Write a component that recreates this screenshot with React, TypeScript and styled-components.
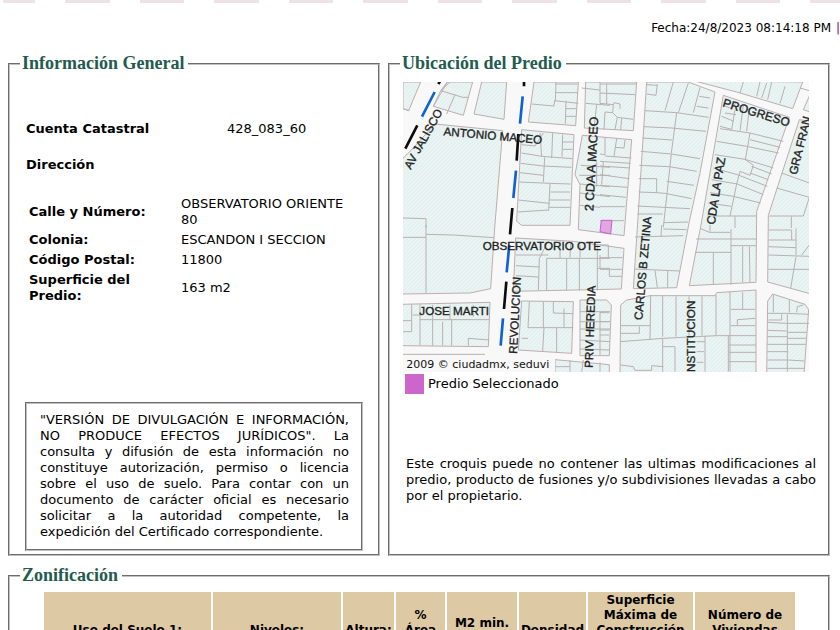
import React from "react";
import styled, { createGlobalStyle } from "styled-components";

const GlobalStyle = createGlobalStyle`
  * { box-sizing: border-box; }
  html { scrollbar-width: none; }
  body {
    margin: 0;
    background: #fff;
    color: #000;
    overflow-x: hidden;
    font-family: Verdana, "DejaVu Sans", sans-serif;
    font-size: 13px;
    line-height: 16px;
  }
`;

const Page = styled.div`
  display: flex;
  flex-direction: column;
`;

const DashStrip = styled.div`
  display: flex;
  gap: 30px;
  height: 3px;
  margin: 0 -15px 0 3px;
`;

const Dash = styled.span<{ $short?: boolean }>`
  flex: ${(p) => (p.$short ? "0 0 32px" : "1")};
  background: #ede3e7;
`;

const DateBar = styled.div`
  display: flex;
  justify-content: flex-end;
  gap: 5px;
  height: 50px;
  padding-top: 17px;
  font-size: 12px;
`;

const Separator = styled.span`
  width: 4px;
  color: #800080;
`;

const Main = styled.main`
  display: flex;
  flex-direction: column;
  gap: 9px;
  padding: 0 10px 20px 8px;
`;

const Columns = styled.div`
  display: grid;
  grid-template-columns: minmax(0, 372fr) minmax(0, 442fr);
  gap: 8px;
`;

const Panel = styled.fieldset<{ $flush?: boolean }>`
  display: flex;
  flex-direction: column;
  min-width: 0;
  margin: 0;
  padding: ${(p) => (p.$flush ? "4px" : "8px")} 12px 3px;
  border: 2px groove #c0c0c0;
`;

const Title = styled.legend`
  margin-left: -2px;
  padding: 0 4px 0 2px;
  color: #235b4e;
  font-family: "Liberation Serif", serif;
  font-size: 18px;
  font-weight: bold;
  line-height: 21px;
`;

const Account = styled.dl`
  display: grid;
  grid-template-columns: 201px 1fr;
  margin: 39px 0 20px;
  padding-left: 4px;
`;

const Term = styled.dt`
  font-weight: bold;
`;

const Value = styled.dd`
  margin: 0;
`;

const Subtitle = styled.h2`
  margin: 0 0 20px;
  padding-left: 4px;
  font-size: 13px;
  line-height: 16px;
`;

const AddressTable = styled.table`
  width: 100%;
  border-spacing: 2px;
  padding-left: 4px;
`;

const AddressLabel = styled.th`
  width: 150px;
  padding: 1px;
  text-align: left;
`;

const AddressValue = styled.td`
  padding: 1px;
  padding-right: 20px;
`;

const Notice = styled.p`
  margin: auto 3px 0;
  padding: 8px 12px 9px 13px;
  border: 2px groove #c0c0c0;
  text-align: justify;
`;

const MapSvg = styled.svg`
  display: block;
  width: 100%;
  height: auto;
  background: #f8f8f8;
`;

const MapArea = styled.div`
  margin: 0 7px 0 1px;
`;

const Key = styled.div`
  display: flex;
  align-items: center;
  gap: 4px;
  height: 20px;
  margin: 2px 0 62px 3px;
`;

const Swatch = styled.span`
  width: 19px;
  height: 20px;
  background: #cc66cc;
`;

const Disclaimer = styled.p`
  margin: 0 0 47px 4px;
  text-align: justify;
`;

const ZoneTable = styled.table`
  width: 100%;
  border-spacing: 2px;
  table-layout: fixed;
  font-size: 12px;
  line-height: 15px;
`;

const ZoneArea = styled.div`
  margin: 0 19px 0 20px;
`;

const ZoneHead = styled.th<{ $share: number }>`
  width: ${(p) => p.$share}%;
  padding: 1px;
  background: #ddc9a3;
  white-space: pre-line;
`;

const zoneColumns: { label: string; weight: number }[] = [
  { label: "Uso del Suelo 1:", weight: 167 },
  { label: "Niveles:", weight: 128 },
  { label: "Altura:", weight: 51 },
  { label: "%\nÁrea\nLibre", weight: 49 },
  { label: "M2 min.\nVivienda:", weight: 70 },
  { label: "Densidad", weight: 67 },
  { label: "Superficie Máxima de Construcción (Sujeta a restricciones)", weight: 105 },
  { label: "Número de Viviendas Permitidas", weight: 100 },
];

const totalWeight = zoneColumns.reduce((sum, c) => sum + c.weight, 0);

const address = [
  ["Calle y Número:", "OBSERVATORIO ORIENTE 80"],
  ["Colonia:", "ESCANDON I SECCION"],
  ["Código Postal:", "11800"],
  ["Superficie del Predio:", "163 m2"],
];

const blocks = [
  "9,12 62,12 26,98 9,92",
  "142,12 218,12 190,112 100,85",
  "245,12 320,12 312,124 222,108",
  "402,12 535,12 527,143 385,132",
  "557,12 710,12 700,158 553,150",
  "740,12 865,12 945,42 900,285 868,430 830,629 700,632 712,450",
  "880,8 1208,12 1178,92 1010,42",
  "970,52 1168,118 1070,400 1068,613 868,623 903,441",
  "1210,95 1230,50 1230,102",
  "1198,125 1230,130 1230,647 1103,612 1105,412",
  "5,245 30,220 105,138 308,158 284,450 272,632 210,645 5,648",
  "365,155 522,170 510,442 365,442 350,430",
  "547,172 695,185 672,473 535,455 540,320 525,290",
  "347,480 520,490 672,511 664,633 340,640",
  "5,679 270,673 265,806 5,803",
  "365,669 520,671 515,826 355,816",
  "540,666 620,666 634,681 628,833 540,833",
  "465,845 628,860 628,890 465,890",
  "662,681 680,666 750,653 945,653 950,644 1068,636 1068,890 660,890",
  "1103,669 1118,648 1215,679 1226,695 1212,890 1100,890",
];

const lotsNW =
  "M9 92L28 98M122 38L188 58L206 58M150 12L125 35M165 50L140 108M142 12L122 38L100 85M395 78L462 84L464 68L535 76M468 12L466 70M466 18H533M466 44H532M498 68L496 137M496 92H530M496 115H528M545 30L600 36M557 76L630 82M590 80L582 150M600 12V76M365 200L405 204M420 165L425 235M405 204L430 165M458 165L455 240M365 225L425 235L518 242M488 170L486 236M488 192H520M488 214H518M362 256L430 264L514 268M434 238L430 312M360 284L430 292M358 312L450 316L512 318M450 318L446 398M452 342H510M355 366L448 376M448 366H510M353 402L445 396M448 388H510M542 262L630 268M538 292H630M540 318L630 326M540 345L630 356M540 382L600 388M590 250V326M9 420L78 422V450";
const lotsNE =
  "M0 18H108M0 45L106 50M20 18V78M0 76L40 80L38 104L15 102M40 80L42 74L60 78V92M38 104L52 118L100 124M15 102L12 154M52 118L45 154M65 120L62 156M172 18L168 52L140 48M140 20L172 22M220 12L195 98M265 15L235 104M135 98L230 104L325 118M230 104L214 225M300 28L280 104M298 55L330 60M290 85L325 90M130 146L216 150L318 160M128 180L216 186M122 220L214 228L300 242M214 228L190 448M118 262L208 266L290 280M116 302L170 302V344L116 342M200 310L282 322M170 344L195 346L275 362M112 384L190 388L270 392M190 434L264 432M112 408H188M15 178V230L0 228M50 182L42 234M75 186L72 210L45 208M15 234L94 240M0 250L92 256M0 264L90 270M10 250L5 320M0 290L88 302M0 322L82 328M0 350L78 358M0 386H75M0 428H72M430 12L420 45M480 12L470 55M500 15L485 60M515 12L503 65M555 25L540 76M600 30L628 38M370 82L395 92L408 74M365 115L402 130M360 145L395 154M405 95L395 154M408 110L375 105M430 82L420 158M448 90L440 160M360 152L450 165L550 190M450 165L436 245M350 190L440 205L536 225M450 185L540 208M345 230L435 244L520 270M435 244L460 262L450 292L420 280L410 318L390 414M455 265L515 288M450 285L505 305M340 270L412 290L502 325M335 305L412 318L490 350M330 344L400 355L482 375M325 375L394 385M322 414L470 414M405 415V450M545 285L628 315M530 330L628 358L610 414M508 414H610M574 415V450";
const lotsSW =
  "M78 0V206M9 37H78M78 28L160 30L282 38M348 90H445M445 48L418 100L415 195M348 122L418 126M348 152L415 156M440 100V197M500 100V197M538 100V197M440 100H630M480 48V100M592 58V197M512 55L510 98M540 60V98M592 130H630M600 90V130M9 287H35M35 238V320H9M60 238V362M38 270H62M98 240V362M128 290V362M155 285V362M60 284H268M205 362V340L268 345M150 240V285M220 240V275M9 388H255M388 230L384 308H520M430 230V308M460 230V264L520 266M492 250V308M432 308L428 378M470 308V382M365 340H384M540 260H630M540 290H630M540 312H630M540 345L630 350M560 260V290M600 260V390M540 372L630 375M510 405V440M550 405L545 440M600 412V440M465 425H510";
const lotsSE =
  "M105 36L250 32M185 0L183 34M190 12L260 14M102 132L240 138M165 136L172 188M203 138V188M0 60H25V98M0 98H68M0 133H66M28 135V154H66M300 10L328 22H390M330 0V20M288 42H470M393 12V180M285 82H393M340 82V180M393 62H468M428 64V172M448 64L450 172M505 45H588M505 65L588 68M588 10V90M505 90L628 94M505 133H628M588 95L572 190M628 60L605 90M505 15H575V45M0 263H28M0 290H28M0 315H28M0 330H28M62 302H150M118 304V325H62M152 210L150 345M188 212V335M228 214V335M267 214V335M306 214V332M348 210V332M390 200V440M392 253H466M428 202V252M412 302V284L466 280M392 302H466M350 332H468M60 350L190 340L350 332M188 340V440M188 365H225V440M315 332V440M290 350H315M290 380H312M290 412H310M385 332V440M388 360H468M388 382H468M385 410H468M62 420L100 425L105 436H155V422L190 425M503 265H560L628 268M505 285H545V268M562 268V440M502 292L560 295H628M502 316L560 318M562 322H620M562 340H618M502 335L562 335M502 358H618M502 380H565M502 405H565L614 408M502 430H612M568 225V262M520 210V262M590 262L592 245L610 240";

const CityMap = () => (
  <MapSvg viewBox="9 12 1218 870" role="img" aria-label="Croquis de ubicación del predio">
    <defs>
      <pattern id="hatch" width="12" height="12" patternUnits="userSpaceOnUse">
        <rect width="12" height="12" fill="#f1f3f3" />
        <path d="M-3 3L3 -3M0 12L12 0M9 15L15 9" stroke="#dcf2f0" strokeWidth="4" />
      </pattern>
    </defs>
    <g fill="url(#hatch)" stroke="#bdaeae" strokeWidth="3">
      {blocks.map((points) => (
        <polygon key={points} points={points} />
      ))}
    </g>
    <g fill="none" stroke="#b9b0b0" strokeWidth="3">
      <path d={lotsNW} />
      <path d={lotsNE} transform="translate(600 0)" />
      <path d={lotsSW} transform="translate(0 441)" />
      <path d={lotsSE} transform="translate(600 441)" />
    </g>
    <polygon points="604,427 636,427 632,468 600,461" fill="#e3a6e3" stroke="#c561cf" strokeWidth="3" />
    <g fill="none" strokeWidth="8">
      <path
        d="M121 8L115 18M52 142L16 212M372 10V25M355 168L350 248M337 390L330 469M319 611L312 693"
        stroke="#0c0c0c"
      />
      <path d="M104 42L66 116M368 55L360 137M348 278L340 360M328 501L320 583M309 721L302 803" stroke="#0f62d6" />
    </g>
    <rect x="9" y="838" width="456" height="46" fill="#f8f8f8" />
    <g fill="#222" fontFamily="'Liberation Sans', Arial, sans-serif" fontSize="35" stroke="#222" strokeWidth="1">
      <text transform="translate(130 172) rotate(5)">ANTONIO MACEO</text>
      <text transform="translate(32 276) rotate(-61)">AV JALISCO</text>
      <text transform="translate(580 400) rotate(-87)" fontSize="37">
        2 CDA A MACEO
      </text>
      <text transform="translate(966 85) rotate(17)" fontSize="36">
        PROGRESO
      </text>
      <text transform="translate(1190 292) rotate(-76)">GRA FRAN</text>
      <text transform="translate(944 441) rotate(-81)" fontSize="36">
        CDA LA PAZ
      </text>
      <text x="248" y="515">OBSERVATORIO OTE</text>
      <text x="58" y="711">JOSE MARTI</text>
      <text transform="translate(351 828) rotate(-87)">REVOLUCION</text>
      <text transform="translate(578 870) rotate(-88)">PRIV HEREDIA</text>
      <text transform="translate(727 727) rotate(-85)">CARLOS B ZETINA</text>
      <text transform="translate(886 668) rotate(-90)" textAnchor="end">
        ONSTITUCION
      </text>
    </g>
    <text x="19" y="871" fontSize="33" fill="#111" fontFamily="Verdana, 'DejaVu Sans', sans-serif">
      2009 © ciudadmx, seduvi
    </text>
  </MapSvg>
);

export default function App() {
  return (
    <Page>
      <GlobalStyle />
      <DashStrip>
        {Array.from({ length: 12 }, (_, i) => (
          <Dash key={i} $short={i === 0} />
        ))}
      </DashStrip>
      <DateBar>
        <span>Fecha:24/8/2023 08:14:18 PM</span>
        <Separator>|</Separator>
      </DateBar>
      <Main>
        <Columns>
          <Panel>
            <Title>Información General</Title>
            <Account>
              <Term>Cuenta Catastral</Term>
              <Value>428_083_60</Value>
            </Account>
            <Subtitle>Dirección</Subtitle>
            <AddressTable>
              <tbody>
                {address.map(([label, value]) => (
                  <tr key={label}>
                    <AddressLabel scope="row">{label}</AddressLabel>
                    <AddressValue>{value}</AddressValue>
                  </tr>
                ))}
              </tbody>
            </AddressTable>
            <Notice>
              "VERSIÓN DE DIVULGACIÓN E INFORMACIÓN, NO PRODUCE EFECTOS JURÍDICOS". La consulta y difusión de esta
              información no constituye autorización, permiso o licencia sobre el uso de suelo. Para contar con un
              documento de carácter oficial es necesario solicitar a la autoridad competente, la expedición del
              Certificado correspondiente.
            </Notice>
          </Panel>
          <Panel>
            <Title>Ubicación del Predio</Title>
            <MapArea>
              <CityMap />
            </MapArea>
            <Key>
              <Swatch />
              <span>Predio Seleccionado</span>
            </Key>
            <Disclaimer>
              Este croquis puede no contener las ultimas modificaciones al predio, producto de fusiones y/o
              subdivisiones llevadas a cabo por el propietario.
            </Disclaimer>
          </Panel>
        </Columns>
        <Panel $flush>
          <Title>Zonificación</Title>
          <ZoneArea>
            <ZoneTable>
              <thead>
                <tr>
                  {zoneColumns.map((c) => (
                    <ZoneHead key={c.label} $share={(c.weight / totalWeight) * 100} scope="col">
                      {c.label}
                    </ZoneHead>
                  ))}
                </tr>
              </thead>
            </ZoneTable>
          </ZoneArea>
        </Panel>
      </Main>
    </Page>
  );
}
